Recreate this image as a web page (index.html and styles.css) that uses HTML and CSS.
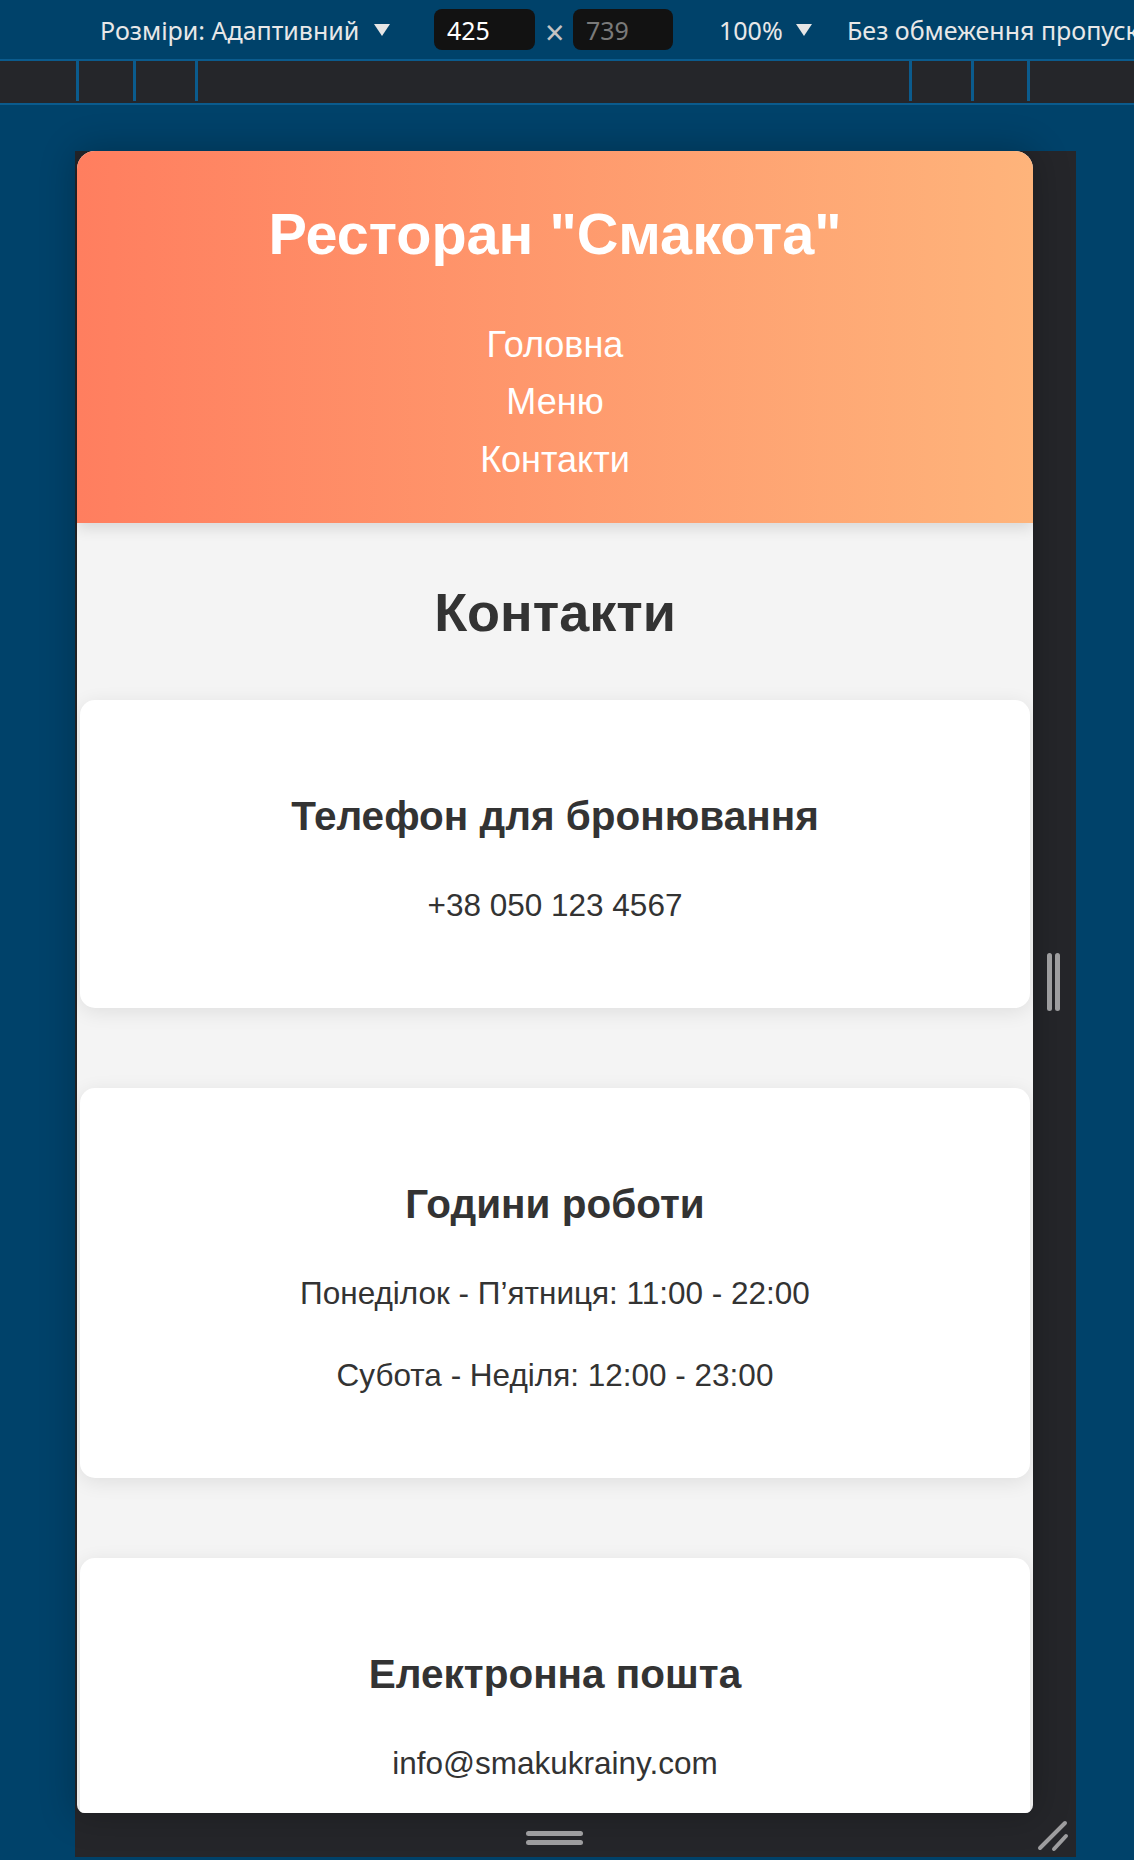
FILE: index.html
```html
<!DOCTYPE html>
<html lang="uk">
<head>
<meta charset="utf-8">
<title>Ресторан "Смакота" — Контакти</title>
<link rel="stylesheet" href="styles.css">
</head>
<body>
<div class="toolbar">
  <span class="tb-label">Розміри: Адаптивний</span>
  <svg class="tb-caret" viewBox="0 0 16 12"><path d="M0 0H16L8 12Z"/></svg>
  <span class="tb-input tb-w">425</span>
  <span class="tb-x">×</span>
  <span class="tb-input tb-h">739</span>
  <span class="tb-zoom">100%</span>
  <svg class="tb-caret tb-caret2" viewBox="0 0 16 12"><path d="M0 0H16L8 12Z"/></svg>
  <span class="tb-throttle">Без обмеження пропускної здатності</span>
</div>
<div class="devbar">
  <span class="dv-pad"></span>
  <span class="dv-seg dv-a"></span>
  <span class="dv-seg dv-b"></span>
  <span class="dv-seg dv-c"></span>
  <span class="dv-seg dv-d"></span>
  <span class="dv-seg dv-e"></span>
  <span class="dv-seg dv-f"></span>
</div>
<div class="stage">
  <div class="device">
    <div class="device-row">
      <div class="viewport">
        <header class="site-header">
          <h1>Ресторан "Смакота"</h1>
          <nav>
            <ul class="nav-list">
              <li><a href="#">Головна</a></li>
              <li><a href="#">Меню</a></li>
              <li><a href="#">Контакти</a></li>
            </ul>
          </nav>
        </header>
        <main class="content">
          <h2>Контакти</h2>
          <section class="card">
            <h3>Телефон для бронювання</h3>
            <p>+38 050 123 4567</p>
          </section>
          <section class="card">
            <h3>Години роботи</h3>
            <p>Понеділок - П’ятниця: 11:00 - 22:00</p>
            <p>Субота - Неділя: 12:00 - 23:00</p>
          </section>
          <section class="card">
            <h3>Електронна пошта</h3>
            <p>info@smakukrainy.com</p>
          </section>
        </main>
      </div>
      <div class="side">
        <span class="vbar"></span>
        <span class="vbar"></span>
      </div>
    </div>
    <div class="device-foot">
      <div class="foot-center">
        <div class="hbars">
          <span class="hbar"></span>
          <span class="hbar"></span>
        </div>
      </div>
      <div class="foot-side">
        <svg class="grip" viewBox="0 0 43 44">
          <path d="M7 35L32 10M21 36L33 23"/>
        </svg>
      </div>
    </div>
  </div>
</div>
</body>
</html>
```
FILE: styles.css
```css
* {
  box-sizing: border-box;
}

html,
body {
  margin: 0;
  padding: 0;
}

body {
  width: 1134px;
  height: 1860px;
  overflow: hidden;
  background: #00426a;
  font-family: "Liberation Sans", Arial, sans-serif;
}

/* ---------- devtools toolbar ---------- */
.toolbar {
  height: 59px;
  display: flex;
  align-items: center;
  padding-left: 100px;
  font-family: "Noto Sans", "Open Sans", sans-serif;
  font-size: 25px;
  color: #e8e8e8;
  white-space: nowrap;
  overflow: hidden;
}

.tb-label {
  flex: none;
  width: 260px;
}

.tb-caret {
  flex: none;
  width: 16px;
  height: 12px;
  margin-left: 14px;
  fill: #e6e6e6;
}

.tb-input {
  flex: none;
  height: 41px;
  background: #121212;
  border-radius: 8px;
  padding-left: 13px;
  display: flex;
  align-items: center;
}

.tb-w {
  width: 101px;
  margin-left: 44px;
  color: #ffffff;
}

.tb-x {
  flex: none;
  width: 18px;
  margin-left: 10px;
  color: #c4c4c4;
  font-size: 34px;
  line-height: 1;
  text-align: center;
  padding-top: 4px;
}

.tb-h {
  width: 100px;
  margin-left: 10px;
  color: #7a7a7a;
}

.tb-zoom {
  flex: none;
  width: 64px;
  margin-left: 46px;
}

.tb-caret2 {
  margin-left: 13px;
}

.tb-throttle {
  flex: none;
  margin-left: 35px;
}

/* ---------- devtools secondary bar ---------- */
.devbar {
  height: 46px;
  display: flex;
  background: #25262a;
  border-top: 2px solid #0b5b8d;
  border-bottom: 2px solid #0b5b8d;
}

.dv-pad {
  flex: none;
  width: 76px;
}

.dv-seg {
  flex: none;
  height: 40px;
  border-left: 3px solid #0b5b8d;
}

.dv-a { width: 57px; }
.dv-b { width: 62px; }
.dv-c { width: 714px; }
.dv-d { width: 62px; }
.dv-e { width: 56px; }
.dv-f { flex: 1; }

/* ---------- device frame ---------- */
.stage {
  padding-top: 46px;
}

.device {
  width: 1001px;
  margin-left: 75px;
  background: #25262a;
}

.device-row {
  display: flex;
}

.viewport {
  flex: none;
  width: 956px;
  height: 1662px;
  margin-left: 2px;
  overflow: hidden;
  background: #f4f4f4;
  border-radius: 18px 18px 8px 8px;
  box-shadow: 0 0 34px 4px rgba(0, 0, 0, 0.22);
}

.side {
  flex: none;
  width: 43px;
  display: flex;
  align-items: center;
  gap: 3px;
  padding-left: 14px;
}

.vbar {
  width: 5px;
  height: 58px;
  border-radius: 3px;
  background: #9d9d9f;
}

.device-foot {
  height: 44px;
  display: flex;
}

.foot-center {
  flex: none;
  width: 958px;
  display: flex;
  justify-content: center;
  padding-top: 18px;
}

.hbars {
  display: flex;
  flex-direction: column;
  gap: 4px;
}

.hbar {
  width: 57px;
  height: 5px;
  border-radius: 3px;
  background: #9d9d9f;
}

.foot-side {
  flex: none;
  width: 43px;
}

.grip {
  display: block;
  width: 43px;
  height: 44px;
  fill: none;
  stroke: #9d9d9f;
  stroke-width: 4;
  stroke-linecap: round;
}

/* ---------- site inside the viewport ---------- */
.site-header {
  position: relative;
  z-index: 1;
  height: 372px;
  padding-top: 50px;
  text-align: center;
  background: linear-gradient(to right, #ff7e5f, #feb47b);
  box-shadow: 0 5px 14px rgba(0, 0, 0, 0.12);
}

.site-header h1 {
  margin: 0;
  font-size: 57.6px;
  line-height: 66px;
  font-weight: bold;
  color: #ffffff;
}

.nav-list {
  list-style: none;
  margin: 57.5px 0 0;
  padding: 0;
  display: flex;
  flex-direction: column;
  align-items: center;
  gap: 17.5px;
}

.nav-list a {
  display: block;
  font-size: 36px;
  line-height: 40px;
  color: #ffffff;
  text-decoration: none;
}

.content {
  text-align: center;
  color: #333333;
}

.content h2 {
  margin: 59px 0 58px;
  font-size: 54px;
  line-height: 60px;
  font-weight: bold;
  color: #333333;
}

.card {
  margin: 0 3px 80px;
  padding: 45px 20px 38px;
  background: #ffffff;
  border-radius: 15px;
  box-shadow: 0 4px 20px rgba(0, 0, 0, 0.09);
}

.card h3 {
  margin: 47px 0 48px;
  font-size: 40.5px;
  line-height: 48px;
  font-weight: bold;
  color: #333333;
}

.card p {
  margin: 48px 0;
  font-size: 31.5px;
  line-height: 34px;
  color: #333333;
}
```
